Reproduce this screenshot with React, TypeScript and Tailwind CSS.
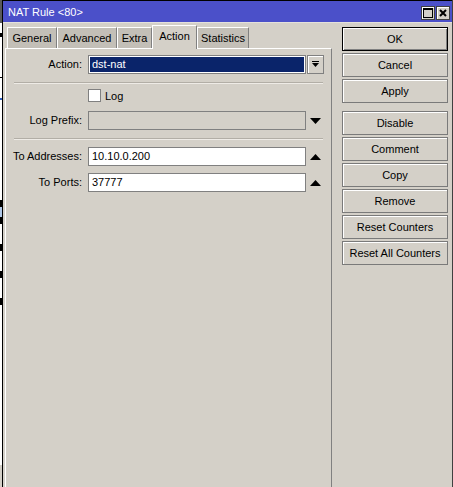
import React from "react";

const font = { fontFamily: '"Liberation Sans", Arial, sans-serif' };

function Tab({ label, w, active }: { label: string; w: string; active?: boolean }) {
  if (active) {
    return (
      <div
        className={`${w} h-[24px] relative z-10 -mb-px flex items-center justify-center bg-[#d4d0c8] border-t border-l border-white border-r border-r-[#808080] text-[11px] text-black`}
      >
        <span className="-mt-[2px]">{label}</span>
      </div>
    );
  }
  return (
    <div
      className={`${w} h-[21px] flex items-center justify-center bg-[#c3bfb7] border-t border-l border-white border-r border-r-[#808080] text-[11px] text-black`}
    >
      <span className="mt-[1px]">{label}</span>
    </div>
  );
}

function Btn({ label, def, mt }: { label: string; def?: boolean; mt?: string }) {
  return (
    <div
      className={`${mt ?? "mt-[2px]"} h-[24px] w-[106px] flex items-center justify-center text-[11px] text-black bg-[#d4d0c8] border ${
        def ? "border-black shadow-[inset_1px_1px_0_#ffffff,inset_-1px_-1px_0_#808080]" : "border-[#7a7a7a] shadow-[inset_1px_1px_0_#ffffff]"
      }`}
    >
      {label}
    </div>
  );
}

function Label({ text }: { text: string }) {
  return <div className="w-[76px] text-right text-[11px] text-black leading-none">{text}</div>;
}

function UpArrow() {
  return (
    <svg width="11" height="6" viewBox="0 0 11 6" className="ml-[4px]">
      <polygon points="0,6 5.5,0 11,6" fill="#000" />
    </svg>
  );
}

function DownArrow() {
  return (
    <svg width="11" height="6" viewBox="0 0 11 6" className="ml-[4px]">
      <polygon points="0,0 5.5,6 11,0" fill="#000" />
    </svg>
  );
}

export default function App() {
  return (
    <div className="w-[453px] h-[487px] flex bg-[#d4d0c8] overflow-hidden" style={font}>
      {/* background window sliver */}
      <div className="w-[2px] h-full flex flex-col bg-white">
        <div className="h-[23px] bg-[#5a5a5a]" />
        <div className="h-[10px]" />
        <div className="h-[4px] bg-black" />
        <div className="h-[40px]" />
        <div className="h-[1px] bg-black" />
        <div className="h-[20px]" />
        <div className="h-[2px] bg-[#3060c0]" />
        <div className="h-[100px]" />
        <div className="h-[7px] bg-black" />
        <div className="h-[10px] bg-[#b0c8e8]" />
        <div className="h-[7px] bg-black" />
        <div className="h-[20px]" />
        <div className="h-[7px] bg-black" />
        <div className="h-[20px]" />
        <div className="h-[7px] bg-black" />
        <div className="h-[20px]" />
        <div className="h-[7px] bg-black" />
        <div className="flex-1" />
        <div className="h-[22px] bg-[#d4d0c8]" />
      </div>
      <div className="w-[1px] h-full bg-black" />

      {/* window */}
      <div className="flex-1 flex flex-col border-r border-[#404040]">
        {/* title bar */}
        <div className="h-[22px] border-t border-black bg-[#4b50c9] flex items-center">
          <span className="ml-[5px] text-[11px] text-white mt-[1px]">NAT Rule &lt;80&gt;</span>
          <div className="ml-auto mr-[2px] flex gap-[1px] mt-[3px]">
            <div className="w-[14px] h-[14px] bg-[#d4d0c8] border border-[#404040] shadow-[inset_1px_1px_0_#ffffff] flex items-center justify-center">
              <svg width="10" height="10" viewBox="0 0 10 10">
                <rect x="0.5" y="0.5" width="9" height="9" fill="none" stroke="#000" />
                <rect x="0" y="0" width="10" height="2" fill="#000" />
              </svg>
            </div>
            <div className="w-[14px] h-[14px] bg-[#d4d0c8] border border-[#404040] shadow-[inset_1px_1px_0_#ffffff] flex items-center justify-center">
              <svg width="8" height="8" viewBox="0 0 8 8">
                <path d="M1 1 L7 7 M7 1 L1 7" stroke="#000" strokeWidth="2" />
              </svg>
            </div>
          </div>
        </div>
        <div className="h-[1px] bg-[#e4e1dc]" />

        {/* body */}
        <div className="flex-1 flex">
          {/* left: tabs + panel */}
          <div className="flex flex-col">
            <div className="mt-[1px] h-[24px] pl-[4px] flex items-end">
              <Tab label="General" w="w-[50px]" />
              <Tab label="Advanced" w="w-[60px]" />
              <Tab label="Extra" w="w-[35px]" />
              <Tab label="Action" w="w-[45px]" active />
              <Tab label="Statistics" w="w-[52px]" />
            </div>
            <div className="ml-[2px] w-[327px] flex-1 border-t border-l border-white border-r border-r-[#808080] flex flex-col">
              {/* Action */}
              <div className="mt-[6px] h-[19px] flex items-center">
                <Label text="Action:" />
                <div className="ml-[6px] w-[218px] h-[19px] border border-[#808080] bg-white p-[1px]">
                  <div className="w-full h-full bg-[#0a246a] text-white text-[11px] leading-[15px] pl-[2px]">dst-nat</div>
                </div>
                <div className="ml-[1px] w-[17px] h-[19px] border border-[#808080] shadow-[inset_1px_1px_0_#ffffff] flex items-center justify-center">
                  <svg width="7" height="7" viewBox="0 0 7 7">
                    <rect x="0" y="0" width="7" height="1" fill="#000" />
                    <polygon points="0,2 7,2 3.5,6" fill="#000" />
                  </svg>
                </div>
              </div>
              <div className="mt-[8px] ml-[8px] w-[309px] border-t border-[#b2aea6] border-b border-b-[#eeebe6]" />

              {/* Log */}
              <div className="mt-[5px] h-[13px] flex items-center">
                <div className="ml-[82px] w-[13px] h-[13px] bg-white border border-[#808080]" />
                <span className="ml-[4px] mt-[2px] text-[11px] text-black">Log</span>
              </div>

              {/* Log Prefix */}
              <div className="mt-[9px] h-[19px] flex items-center">
                <Label text="Log Prefix:" />
                <div className="ml-[6px] w-[218px] h-[19px] border border-[#808080] bg-[#d4d0c8]" />
                <DownArrow />
              </div>
              <div className="mt-[8px] ml-[8px] w-[309px] border-t border-[#b2aea6] border-b border-b-[#eeebe6]" />

              {/* To Addresses */}
              <div className="mt-[7px] h-[19px] flex items-center">
                <Label text="To Addresses:" />
                <div className="ml-[6px] w-[218px] h-[19px] border border-[#808080] bg-white text-[11px] leading-[17px] pl-[3px] text-black">
                  10.10.0.200
                </div>
                <UpArrow />
              </div>

              {/* To Ports */}
              <div className="mt-[7px] h-[19px] flex items-center">
                <Label text="To Ports:" />
                <div className="ml-[6px] w-[218px] h-[19px] border border-[#808080] bg-white text-[11px] leading-[17px] pl-[3px] text-black">
                  37777
                </div>
                <UpArrow />
              </div>
            </div>
          </div>

          {/* right buttons */}
          <div className="ml-[10px] flex flex-col">
            <Btn label="OK" def mt="mt-[4px]" />
            <Btn label="Cancel" mt="mt-[2px]" />
            <Btn label="Apply" mt="mt-[2px]" />
            <Btn label="Disable" mt="mt-[8px]" />
            <Btn label="Comment" />
            <Btn label="Copy" />
            <Btn label="Remove" />
            <Btn label="Reset Counters" />
            <Btn label="Reset All Counters" />
          </div>
        </div>
      </div>
    </div>
  );
}
